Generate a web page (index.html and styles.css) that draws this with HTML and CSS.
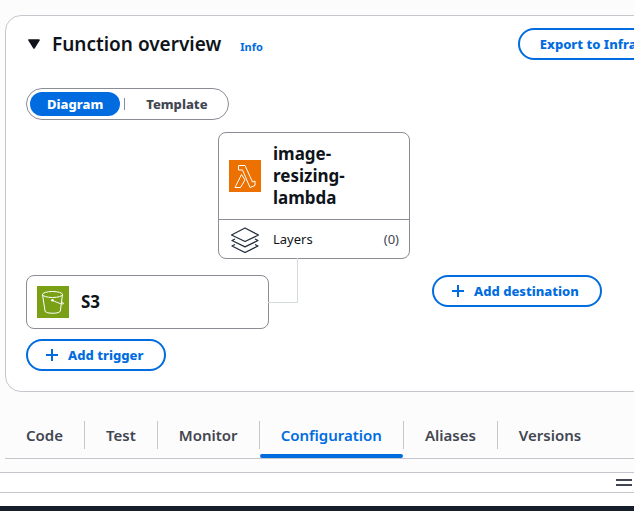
FILE: index.html
```html
<!DOCTYPE html>
<html lang="en">
<head>
<meta charset="utf-8">
<title>Function overview</title>
<link rel="stylesheet" href="styles.css">
</head>
<body>
<main class="page">
  <section class="panel">
    <header class="panel-header">
      <button class="caret" type="button" aria-label="Collapse function overview">
        <svg width="12" height="10" viewBox="0 0 12 10"><path d="M1 1h10L6 9z" fill="#0f141a" stroke="#0f141a" stroke-width="1.6" stroke-linejoin="round"/></svg>
      </button>
      <h2 class="title">Function overview</h2>
      <a class="info" href="#info">Info</a>
      <button class="btn export" type="button">Export to Infrastructure Composer</button>
    </header>
    <div class="toggle">
      <button class="segment selected" type="button" aria-pressed="true">Diagram</button>
      <span class="segment-rule"></span>
      <button class="segment" type="button" aria-pressed="false">Template</button>
    </div>
    <div class="diagram">
      <article class="function card">
        <div class="function-main">
          <svg class="icon" width="32" height="32" viewBox="0 0 32 32"><path fill="#ed7100" d="M0 0h32v32H0z"/><path d="M9.500 5.500h6.500l7.500 16.500 2.500-1v4.500l-5 2L13.500 10H9.500zM12.500 14.500l3.500 5.500-4.500 7.500H6z" fill="none" stroke="#fff" stroke-width="1"/></svg>
          <h3 class="card-title">image-resizing-lambda</h3>
        </div>
        <div class="layers">
          <svg class="icon" width="32" height="28" viewBox="0 0 32 28" fill="none" stroke="#232f3e" stroke-width="1.300" stroke-linejoin="round"><path d="M16 3 29.500 10 16 16.500 2.500 10z"/><path d="M6 14 3 15.500l13 6.300 13-6.300-3-1.500M6 19.500 3 21l13 6.500 13-6.500-3-1.500"/></svg>
          <span>Layers</span>
          <span class="count">(0)</span>
        </div>
      </article>
      <div class="triggers">
        <article class="trigger card">
          <svg class="icon" width="32" height="32" viewBox="0 0 32 32"><path fill="#7aa116" d="M0 0h32v32H0z"/><g fill="none" stroke="#fff"><ellipse cx="15.500" cy="8.500" rx="10" ry="3"/><path d="M5.500 8.500 8 25c.3 3 15 3 15.300 0l2.200-16.500M16 14.500c4 2.200 9.500 4 10.500 3.300.5-.8-1-1.600-2-2"/></g><circle cx="15.500" cy="14.200" r="1.300" fill="#fff"/></svg>
          <h3 class="card-title">S3</h3>
        </article>
        <button class="btn" type="button"><svg class="plus" width="12" height="12" viewBox="0 0 12 12"><path d="M6 0v12M0 6h12" stroke="currentColor" stroke-width="2"/></svg>Add trigger</button>
      </div>
      <div class="destinations">
        <button class="btn" type="button"><svg class="plus" width="12" height="12" viewBox="0 0 12 12"><path d="M6 0v12M0 6h12" stroke="currentColor" stroke-width="2"/></svg>Add destination</button>
      </div>
    </div>
  </section>
  <nav class="tabs">
    <a class="tab" href="#code">Code</a>
    <a class="tab" href="#test">Test</a>
    <a class="tab" href="#monitor">Monitor</a>
    <a class="tab active" href="#configuration" aria-current="page">Configuration</a>
    <a class="tab" href="#aliases">Aliases</a>
    <a class="tab" href="#versions">Versions</a>
  </nav>
</main>
<div class="split">
  <button class="handle" type="button" aria-label="Resize panel"></button>
</div>
<footer class="footer"></footer>
</body>
</html>
```
FILE: styles.css
```css
* { box-sizing: border-box; }

body {
  margin: 0;
  min-height: 100vh;
  display: flex;
  flex-direction: column;
  overflow: hidden;
  background: #fcfcfd;
  color: #0f141a;
  font: 13px/20px "Noto Sans", sans-serif;
}

h2, h3 { margin: 0; }
a { text-decoration: none; }
button { font: inherit; cursor: pointer; }

.page { padding: 15px 0 13px 5px; }

/* The panel is wider than the window and runs off its right edge. */
.panel {
  margin-right: -177px;
  padding: 12px 20px 20px;
  border: 1px solid #c6c6cd;
  border-radius: 16px;
  background: #fff;
}

.panel-header { display: flex; align-items: center; }
.caret {
  display: flex;
  margin-right: 12px;
  padding: 0 0 0 2px;
  border: 0;
  background: none;
}
.title { font-size: 19px; line-height: 24px; font-weight: 650; }
.info { margin: 6px 0 0 19px; color: #006ce0; font-size: 11px; line-height: 16px; font-weight: 700; }

.btn {
  display: flex;
  align-items: center;
  gap: 10px;
  height: 32px;
  padding: 0 21px 0 18px;
  border: 2px solid #006ce0;
  border-radius: 16px;
  background: #fff;
  color: #006ce0;
  font-weight: 800;
  white-space: nowrap;
}
.export { margin-left: auto; padding: 0 20px; }

.toggle {
  display: flex;
  align-items: center;
  width: fit-content;
  height: 32px;
  margin-top: 28px;
  padding: 0 3px;
  border: 1px solid #8c8c94;
  border-radius: 16px;
  background: #fff;
}
.segment {
  height: 24px;
  padding: 0 17px;
  border: 0;
  border-radius: 12px;
  background: none;
  color: #424650;
  font-weight: 800;
  line-height: 24px;
}
.segment.selected { background: #006ce0; color: #fff; }
.segment-rule { width: 1px; height: 12px; margin: 0 4px; background: #8c8c94; }

.diagram {
  display: grid;
  grid-template-columns: 192px 51px 141px auto;
  row-gap: 16px;
  margin-top: 12px;
}
.card { border: 1px solid #8c8c94; border-radius: 8px; background: #fff; }
.card-title { font-size: 17px; line-height: 22px; font-weight: 700; }
.icon { flex: none; }

.function { position: relative; grid-column: 2 / 4; grid-row: 1; }
.function::after {
  content: "";
  position: absolute;
  top: 100%;
  left: 49px;
  width: 29px;
  height: 44px;
  border: solid #d5dbdb;
  border-width: 0 1px 1px 0;
}
.function-main { display: flex; align-items: center; gap: 12px; padding: 10px; }
.layers {
  display: flex;
  align-items: center;
  gap: 12px;
  height: 39px;
  padding: 0 10px;
  border-top: 1px solid #8c8c94;
}
.count { margin-left: auto; color: #424650; }

.triggers {
  grid-column: 1 / 3;
  grid-row: 2;
  display: flex;
  flex-direction: column;
  align-items: flex-start;
  gap: 10px;
}
.trigger { display: flex; align-items: center; gap: 12px; width: 100%; padding: 10px; }
.destinations { grid-column: 4; grid-row: 2; padding-left: 22px; }

.tabs { display: flex; align-items: center; height: 67px; padding-top: 19px; border-bottom: 1px solid #c6c6cd; }
.tab {
  position: relative;
  padding: 0 21px;
  border-right: 1px solid #c6c6cd;
  color: #424650;
  font-size: 15px;
  line-height: 28px;
  font-weight: 650;
}
.tab:last-child { border-right: 0; }
.tab.active { color: #006ce0; }
.tab.active::after {
  content: "";
  position: absolute;
  left: 0;
  right: 0;
  bottom: -9px;
  height: 4px;
  border-radius: 2px;
  background: #006ce0;
}

.split {
  display: flex;
  align-items: center;
  justify-content: flex-end;
  height: 21px;
  padding-right: 2px;
  border: solid #c6c6cd;
  border-width: 1px 0;
  background: #fff;
}
.handle {
  width: 16px;
  height: 7px;
  padding: 0;
  border: solid #424650;
  border-width: 2px 0;
  background: none;
}
.footer { flex: 1; border-top: 13px solid #fff; background: #161d2b; }
```
